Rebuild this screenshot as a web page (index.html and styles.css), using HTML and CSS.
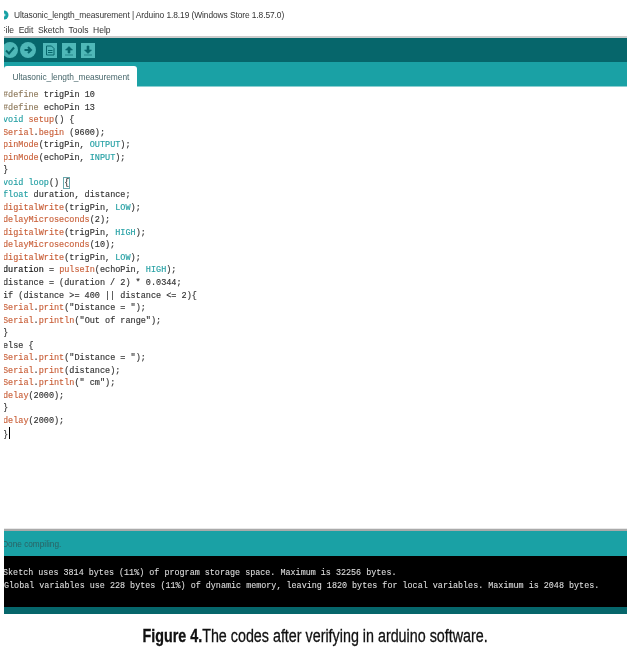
FILE: index.html
```html
<!DOCTYPE html>
<html lang="en">
<head>
<meta charset="utf-8">
<title>Ultasonic_length_measurement</title>
<link rel="stylesheet" href="styles.css">
</head>
<body>
<main class="shot">
  <div class="titlebar">
    <svg class="logo" width="10" height="10" viewBox="0 0 10 10"><circle cx="3" cy="5" r="4.500" fill="#17a1a5"/><path d="M1.500 5h3M3 3.500v3" stroke="#fff" stroke-width="1"/></svg>
    <span class="title-text">Ultasonic_length_measurement | Arduino 1.8.19 (Windows Store 1.8.57.0)</span>
  </div>
  <nav class="menubar"><span class="menu-first">File</span><span>Edit</span><span>Sketch</span><span>Tools</span><span>Help</span></nav>
  <div class="toolbar">
    <svg class="round" width="16" height="16" viewBox="0 0 16 16"><circle cx="8" cy="8" r="8" fill="#4fb8b8"/><path d="M4 8.500l3 3 5-6" fill="none" stroke="#06666b" stroke-width="2"/></svg>
    <svg class="round" width="16" height="16" viewBox="0 0 16 16"><circle cx="8" cy="8" r="8" fill="#4fb8b8"/><path d="M4.500 8h6M8 5l3 3-3 3" fill="none" stroke="#06666b" stroke-width="2"/></svg>
    <svg class="square sq-first" width="14" height="15" viewBox="0 0 14 15"><rect width="14" height="15" fill="#4fb8b8"/><path d="M3.500 3h5l2.500 2.500V12H3.500z" fill="none" stroke="#06666b"/><path d="M5 7.500h4.500M5 9.500h4.500" stroke="#06666b"/></svg>
    <svg class="square" width="14" height="15" viewBox="0 0 14 15"><rect width="14" height="15" fill="#4fb8b8"/><path d="M7 3.500L10.500 7H8v3H6V7H3.500zM3 12h8" fill="#06666b" stroke="#06666b" stroke-width=".6"/></svg>
    <svg class="square" width="14" height="15" viewBox="0 0 14 15"><rect width="14" height="15" fill="#4fb8b8"/><path d="M7 10.500L10.500 7H8V3H6v4H3.500zM3 12h8" fill="#06666b" stroke="#06666b" stroke-width=".6"/></svg>
  </div>
  <div class="tabbar"><div class="tab"><span class="tab-text">Ultasonic_length_measurement</span></div></div>
  <pre class="code"><span class="hash">#define</span> trigPin 10
<span class="hash">#define</span> echoPin 13
<span class="kw">void</span> <span class="fn">setup</span>() {
<span class="fn">Serial</span>.<span class="fn">begin</span> (9600);
<span class="fn">pinMode</span>(trigPin, <span class="kw">OUTPUT</span>);
<span class="fn">pinMode</span>(echoPin, <span class="kw">INPUT</span>);
}
<span class="kw">void</span> <span class="kw">loop</span>() <span class="match">{</span>
<span class="kw">float</span> duration, distance;
<span class="fn">digitalWrite</span>(trigPin, <span class="kw">LOW</span>);
<span class="fn">delayMicroseconds</span>(2);
<span class="fn">digitalWrite</span>(trigPin, <span class="kw">HIGH</span>);
<span class="fn">delayMicroseconds</span>(10);
<span class="fn">digitalWrite</span>(trigPin, <span class="kw">LOW</span>);
<span class="dark">duration</span> = <span class="fn">pulseIn</span>(echoPin, <span class="kw">HIGH</span>);
distance = (duration / 2) * 0.0344;
if (distance &gt;= 400 || distance &lt;= 2){
<span class="fn">Serial</span>.<span class="fn">print</span>("Distance = ");
<span class="fn">Serial</span>.<span class="fn">println</span>("Out of range");
}
else {
<span class="fn">Serial</span>.<span class="fn">print</span>("Distance = ");
<span class="fn">Serial</span>.<span class="fn">print</span>(distance);
<span class="fn">Serial</span>.<span class="fn">println</span>(" cm");
<span class="fn">delay</span>(2000);
}
<span class="fn">delay</span>(2000);
}<span class="caret"></span></pre>
  <div class="status-rule"></div>
  <div class="status"><span class="status-text">Done compiling.</span></div>
  <pre class="console">Sketch uses 3814 bytes (11%) of program storage space. Maximum is 32256 bytes.
Global variables use 228 bytes (11%) of dynamic memory, leaving 1820 bytes for local variables. Maximum is 2048 bytes.</pre>
  <div class="footer-bar"></div>
</main>
<p class="caption"><span class="caption-inner"><b>Figure 4.</b>The codes after verifying in arduino software.</span></p>
</body>
</html>
```
FILE: styles.css
```css
* { box-sizing: border-box; }
html, body { margin: 0; padding: 0; background: #fff; }
body { width: 636px; height: 650px; overflow: hidden; font-family: "Liberation Sans", Arial, sans-serif; }
.shot { width: 623px; margin-left: 4px; overflow: hidden; }
.titlebar { height: 22px; padding-top: 7px; display: flex; align-items: center; font-size: 9.8px; color: #333; letter-spacing: -0.1px; white-space: nowrap; filter: blur(.3px); }
.logo { margin-left: -3px; margin-right: 3px; flex: none; }
.title-text { display: inline-block; transform: scaleX(.857); transform-origin: left center; }
.menubar { height: 14px; display: flex; gap: 5px; align-items: center; font-size: 9.4px; color: #333; filter: blur(.3px); transform: scaleX(.91); transform-origin: left center; }
.menu-first { margin-left: -4px; }
.toolbar { height: 26px; border-top: 2px solid #ccc; background: #06666b; display: flex; align-items: center; gap: 5px; }
.round { flex: none; }
.round:first-child { margin-left: -2px; margin-right: -3px; }
.toolbar .sq-first { margin-left: 2px; }
.tabbar { height: 25px; padding-top: 4px; background: #1aa1a5; border-bottom: 1px solid #8ccfd1; }
.tab { width: 133px; height: 21px; background: #fff; border-radius: 3px 3px 0 0; font-size: 9.2px; line-height: 22px; text-align: center; color: #47666a; letter-spacing: -0.05px; white-space: nowrap; margin-bottom: -1px; position: relative; filter: blur(.3px); }
.tab-text { display: inline-block; transform: scaleX(.915); }
.code { margin: 0; height: 441px; padding-top: 2px; font-family: "Liberation Mono", monospace; font-size: 8.5px; line-height: 12.53px; color: #333; margin-left: -1px; filter: blur(.35px); -webkit-text-stroke: .15px currentColor; }
.fn { color: #c9603a; }
.kw { color: #25a0a4; }
.hash { color: #8f7b5d; }
.dark { color: #111; }
.match { outline: 1px solid #6aa8ad; }
.caret { display: inline-block; width: 1px; height: 12px; background: #000; vertical-align: -2px; margin-left: 1px; }
.status-rule { height: 3px; background: #aaa; border-top: 1px solid #e8e8e8; }
.status { height: 25px; background: #1aa1a5; font-size: 9.6px; line-height: 25px; color: #2b6264; text-indent: -1px; filter: blur(.3px); }
.status-text { display: inline-block; transform: scaleX(.86); transform-origin: left center; }
.console { margin: 0; height: 51px; padding-top: 11px; background: #000; color: #ddd; font-family: "Liberation Mono", monospace; font-size: 8.42px; line-height: 13px; text-indent: -1px; white-space: pre; overflow: hidden; filter: blur(.3px); -webkit-text-stroke: .1px currentColor; }
.footer-bar { height: 7px; background: #06666b; }
.caption { margin: 13px 0 0; text-align: center; white-space: nowrap; width: 631px; }
.caption-inner { display: inline-block; font-size: 18px; color: #111; transform: scaleX(.795); transform-origin: center; line-height: 18px; -webkit-text-stroke: .3px currentColor; }
```
